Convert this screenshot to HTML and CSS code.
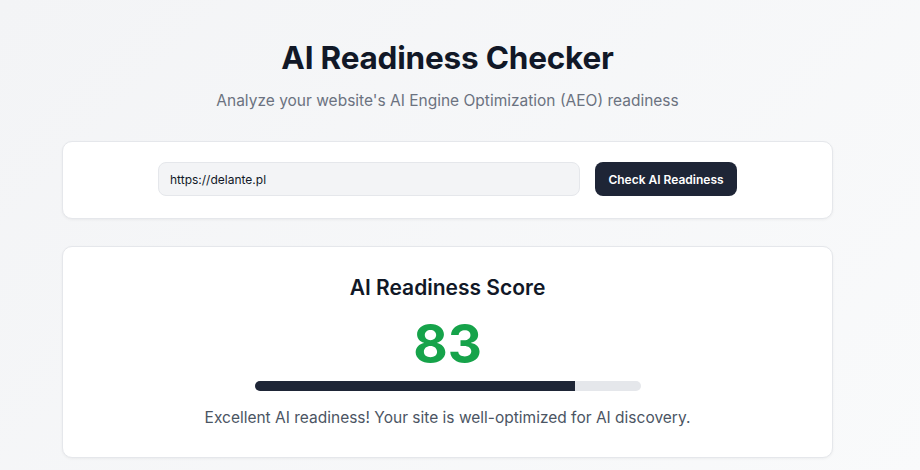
FILE: index.html
```html
<!DOCTYPE html>
<html>
  <head>
    <meta charset="utf-8" />
    <title>AI Readiness Checker</title>
    <meta name="viewport" content="width=device-width" />
    <link rel="stylesheet" href="styles.css">
  </head>
  <body>
    <div class="content">
      <h1>AI Readiness Checker</h1>
      <p class="subtitle">Analyze your website's AI Engine Optimization (AEO) readiness</p>

      <div class="card">
        <form class="check-form">
          <input class="url-input" type="text" value="https://delante.pl" />
          <button class="check-button" type="button">Check AI Readiness</button>
        </form>
      </div>

      <div class="card score-card">
        <div class="score-title">AI Readiness Score</div>
        <div class="score-value">83</div>
        <div class="score-bar">
          <div class="score-bar-fill" style="width: 83%"></div>
        </div>
        <div class="score-message">Excellent AI readiness! Your site is well-optimized for AI discovery.</div>
      </div>
    </div>
  </body>
</html>
```

FILE: styles.css
```css
body {
    font-family: Inter, "Noto Sans", sans-serif;
    color: #111827;
    margin: 0;
    padding: 0;
    background: linear-gradient(135deg, #f3f4f6 0%, #f9fafb 100%);
    min-height: 100vh;
}
.content {
    width: 771px;
    margin-left: 62px;
    padding-top: 38px;
}
h1 {
    text-align: center;
    font-size: 31.5px;
    font-weight: 700;
    line-height: 40px;
    margin: 0 0 12px 0;
    letter-spacing: -0.2px;
}
.subtitle {
    text-align: center;
    color: #6b7280;
    font-size: 15.5px;
    line-height: 22px;
    margin: 0 0 29px 0;
}
.card {
    background: #ffffff;
    border: 1px solid #e5e7eb;
    border-radius: 10px;
    box-shadow: 0 1px 3px rgba(0, 0, 0, 0.05);
    margin-bottom: 27px;
}
.check-form {
    display: flex;
    gap: 15px;
    width: 579px;
    margin: 0 auto;
    padding: 20px 0 22px 0;
}
.url-input {
    flex: 1;
    height: 34px;
    box-sizing: border-box;
    background: #f3f4f6;
    border: 1px solid #e5e7eb;
    border-radius: 8px;
    padding: 0 11px;
    font-family: inherit;
    font-size: 12px;
    color: #111827;
}
.check-button {
    height: 34px;
    width: 142px;
    background: #1e2536;
    color: #ffffff;
    border: none;
    border-radius: 8px;
    font-family: inherit;
    font-size: 12px;
    font-weight: 600;
}
.score-card {
    text-align: center;
    padding: 27px 0 28px 0;
}
.score-title {
    font-size: 21px;
    font-weight: 600;
    line-height: 28px;
}
.score-value {
    color: #16a34a;
    font-size: 53px;
    font-weight: 700;
    line-height: 64px;
    margin-top: 10px;
}
.score-bar {
    width: 386px;
    height: 10px;
    margin: 5px auto 0 auto;
    background: #e5e7eb;
    border-radius: 5px;
    overflow: hidden;
}
.score-bar-fill {
    height: 100%;
    background: #1e2536;
}
.score-message {
    color: #4b5563;
    font-size: 15.5px;
    line-height: 22px;
    margin-top: 16px;
}
```
